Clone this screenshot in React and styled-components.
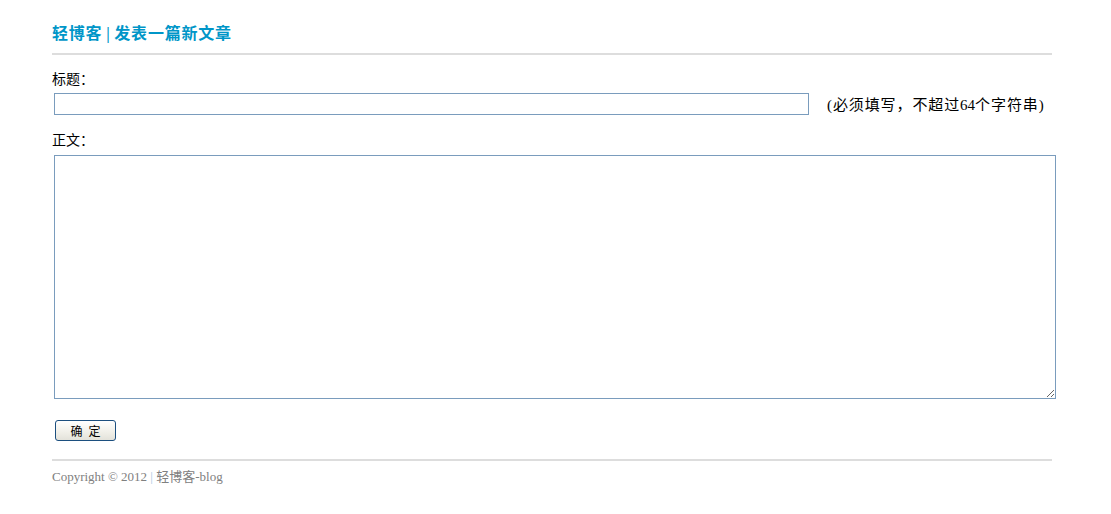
import React from "react";
import styled, { createGlobalStyle } from "styled-components";

const Global = createGlobalStyle`
  html, body { margin: 0; padding: 0; background: #fff; }
  body { font-family: "Liberation Serif", "Noto Sans CJK SC", serif; color: #000; }
`;

const Page = styled.div`
  width: 1000px;
  margin-left: 52px;
  padding-top: 24px;
  display: flex;
  flex-direction: column;
`;

const Header = styled.h1`
  margin: 0;
  font-size: 16px;
  line-height: 20px;
  font-weight: bold;
  color: #0096c8;
  letter-spacing: 0.8px;
  word-spacing: -1px;
  font-family: "Liberation Serif", "Noto Sans CJK SC", serif;
`;

const Rule = styled.div`
  height: 2px;
  background: #dddddd;
  margin-top: ${(p) => p.$top}px;
`;

const Label = styled.div`
  font-size: 14px;
  line-height: 18px;
  margin-top: ${(p) => p.$top}px;
  font-family: "Liberation Serif", "Noto Sans CJK SC", serif;
`;

const Row = styled.div`
  display: flex;
  align-items: center;
  margin-top: 4px;
  padding-left: 2px;
`;

const TextInput = styled.input`
  box-sizing: border-box;
  width: 755px;
  height: 22px;
  margin: 0;
  border: 1px solid #7a9cbd;
  padding: 1px 3px;
  font-size: 13px;
  outline: none;
`;

const Hint = styled.span`
  margin-left: 18px;
  font-size: 15px;
  letter-spacing: 0.9px;
  line-height: 18px;
  margin-top: 1px;
`;

const Digits = styled.span`
  letter-spacing: 0;
`;

const TextArea = styled.textarea`
  box-sizing: border-box;
  display: block;
  width: 1002px;
  height: 244px;
  margin: 5px 0 0 2px;
  border: 1px solid #7a9cbd;
  padding: 2px;
  font-size: 13px;
  outline: none;
`;

const Button = styled.button`
  box-sizing: border-box;
  width: 61px;
  height: 21px;
  margin: 21px 0 0 3px;
  padding: 0;
  border: 1px solid #1c4f7f;
  border-radius: 3px;
  background: linear-gradient(#ffffff, #f0efe8 60%, #e3e2da);
  font-family: "Noto Sans CJK SC", sans-serif;
  font-size: 12px;
  line-height: 18px;
  color: #000;
  letter-spacing: 6px;
  text-indent: 6px;
  cursor: pointer;
`;

const Footer = styled.div`
  margin-top: 8px;
  font-size: 13px;
  line-height: 16px;
  color: #808080;
  font-family: "Liberation Serif", "Noto Sans CJK SC", serif;
`;

const Bar = styled.span`
  color: #a7c7e2;
`;

export default function App() {
  return (
    <>
      <Global />
      <Page>
        <Header>轻博客 | 发表一篇新文章</Header>
        <Rule $top={9} />
        <Label $top={16}>标题：</Label>
        <Row>
          <TextInput type="text" />
          <Hint>
            (必须填写，不超过<Digits>64</Digits>个字符串)
          </Hint>
        </Row>
        <Label $top={17}>正文：</Label>
        <TextArea />
        <div>
          <Button>确定</Button>
        </div>
        <Rule $top={18} />
        <Footer>
          Copyright © 2012 <Bar>|</Bar> 轻博客-blog
        </Footer>
      </Page>
    </>
  );
}
